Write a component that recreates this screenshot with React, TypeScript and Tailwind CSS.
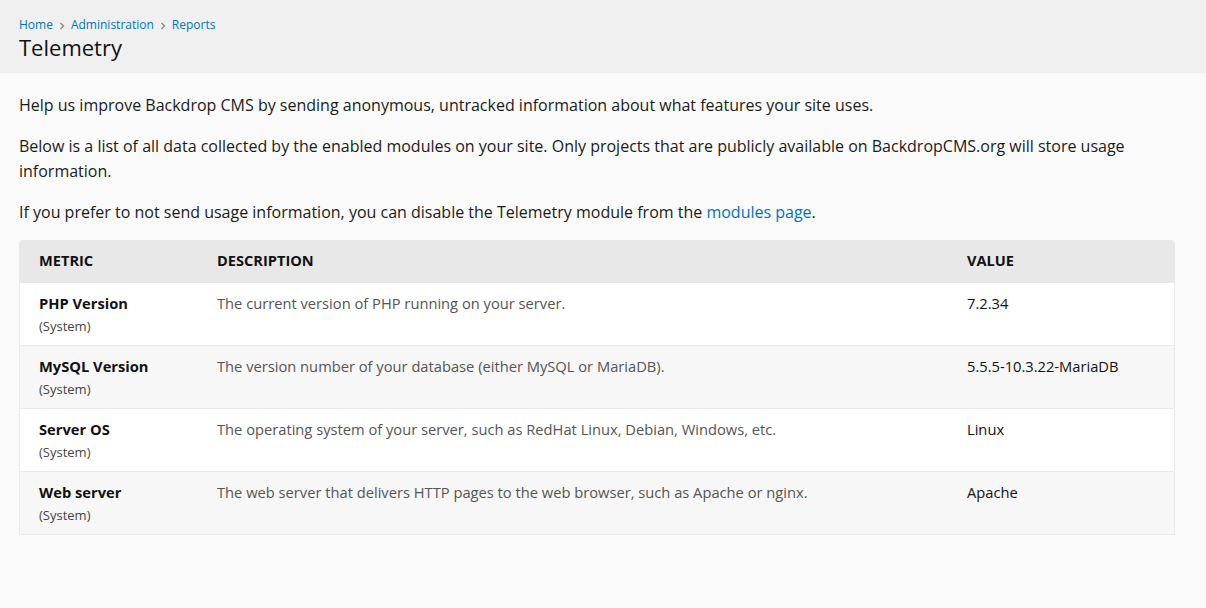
import React from 'react';

const rows = [
  { metric: 'PHP Version', desc: 'The current version of PHP running on your server.', value: '7.2.34' },
  { metric: 'MySQL Version', desc: 'The version number of your database (either MySQL or MariaDB).', value: '5.5.5-10.3.22-MariaDB' },
  { metric: 'Server OS', desc: 'The operating system of your server, such as RedHat Linux, Debian, Windows, etc.', value: 'Linux' },
  { metric: 'Web server', desc: 'The web server that delivers HTTP pages to the web browser, such as Apache or nginx.', value: 'Apache' },
];

function Chevron() {
  return (
    <svg width="6" height="8" viewBox="0 0 6 8" className="mx-[6px] mt-[2px]">
      <path d="M1.5 1 L4.5 4 L1.5 7" fill="none" stroke="#888" strokeWidth="1.4" />
    </svg>
  );
}

export default function App() {
  return (
    <div className="min-h-[608px] w-full bg-[#fafafa] text-[#1a1a1a]" style={{ fontFamily: '"Open Sans", "DejaVu Sans", sans-serif' }}>
      {/* page header */}
      <div className="h-[73px] bg-[#f0f0f0] px-[19px] pt-[16px]">
        <div className="flex items-center text-[12px] leading-[18px] text-[#0074bd]">
          <span>Home</span>
          <Chevron />
          <span>Administration</span>
          <Chevron />
          <span>Reports</span>
        </div>
        <h1 className="text-[22px] leading-[26px] font-normal text-[#111]">Telemetry</h1>
      </div>

      <div className="px-[19px] pr-[31px] pt-[20px] text-[16px] leading-[25.6px]">
        <p className="mb-[15px]">
          Help us improve Backdrop CMS by sending anonymous, untracked information about what features your site uses.
        </p>
        <p className="mb-[15px]">
          Below is a list of all data collected by the enabled modules on your site. Only projects that are publicly available on BackdropCMS.org will store usage information.
        </p>
        <p className="mb-[15px]">
          If you prefer to not send usage information, you can disable the Telemetry module from the{' '}
          <a className="text-[#0074bd]">modules page</a>.
        </p>

        <table className="w-[1156px] table-fixed border-separate border-spacing-0 text-left">
          <thead>
            <tr className="bg-[#e8e8e8]">
              <th className="w-[198px] rounded-tl-[4px] pl-[20px] pt-[9px] pb-[11px] text-[14.6px] leading-[23px] font-bold uppercase text-[#111]">Metric</th>
              <th className="w-[750px] pt-[9px] pb-[11px] text-[14.6px] leading-[23px] font-bold uppercase text-[#111]">Description</th>
              <th className="rounded-tr-[4px] pt-[9px] pb-[11px] text-[14.6px] leading-[23px] font-bold uppercase text-[#111]">Value</th>
            </tr>
          </thead>
          <tbody>
            {rows.map((r, i) => (
              <tr key={r.metric} className={i % 2 === 0 ? 'bg-white' : 'bg-[#f7f7f7]'}>
                <td className="border-l border-b border-[#ebebeb] pl-[19px] pt-[9px] pb-[7px] align-top">
                  <div className="text-[14.7px] leading-[22px] font-bold text-[#111]">{r.metric}</div>
                  <div className="text-[13px] leading-[24px] text-[#444]">(System)</div>
                </td>
                <td className="border-b border-[#ebebeb] pt-[9px] align-top text-[14.7px] leading-[22px] text-[#555]">{r.desc}</td>
                <td className="border-r border-b border-[#ebebeb] pt-[9px] align-top text-[14.7px] leading-[22px] text-[#111]">{r.value}</td>
              </tr>
            ))}
          </tbody>
        </table>
      </div>
    </div>
  );
}
